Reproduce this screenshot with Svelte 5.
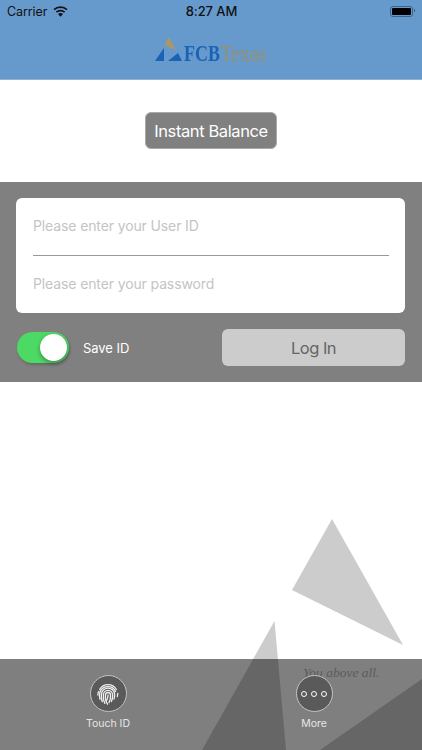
<script>
  let saveId = $state(true);
</script>

<div class="page">
  <header class="top">
    <div class="status">
      <div class="carrier">
        <span>Carrier</span>
        <svg class="wifi" width="15" height="11" viewBox="0 0 15 11">
          <path d="M7.5 10.8 L5 8.1 A3.6 3.6 0 0 1 10 8.1 Z" fill="#111" />
          <path d="M3.4 6.2 A6 6 0 0 1 11.6 6.2" fill="none" stroke="#111" stroke-width="1.7" />
          <path d="M1 3.7 A9.6 9.6 0 0 1 14 3.7" fill="none" stroke="#111" stroke-width="1.7" />
        </svg>
      </div>
      <span class="clock">8:27 AM</span>
      <div class="battery"><i></i></div>
    </div>
    <div class="logo">
      <svg width="28" height="26" viewBox="0 0 28 26">
        <polygon points="14,1 9,9 21,14" fill="#a9976c" />
        <polygon points="9,12 9,25 0,25" fill="#1b62b4" />
        <polygon points="23,17 27,25 13,25" fill="#1b62b4" />
      </svg>
      <span class="fcb">FCB</span><span class="texas">Texas</span>
    </div>
  </header>

  <section class="instant">
    <button class="instant-btn">Instant Balance</button>
  </section>

  <section class="login">
    <div class="card">
      <div class="field"><input placeholder="Please enter your User ID" /></div>
      <div class="field"><input type="password" placeholder="Please enter your password" /></div>
    </div>
    <div class="row">
      <div class="save">
        <button class="toggle" class:on={saveId} aria-label="Save ID" onclick={() => (saveId = !saveId)}><i></i></button>
        <span>Save ID</span>
      </div>
      <button class="log-in">Log In</button>
    </div>
  </section>

  <div class="spacer"></div>

  <svg class="shapes" width="422" height="240" viewBox="0 510 422 240">
    <polygon points="332,519 292,590 403,645" fill="#ccc" />
    <polygon points="274.5,621 202,750 286,750" fill="#ccc" />
    <polygon points="320,750 422,679 422,750" fill="#ccc" />
  </svg>
  <span class="tagline">You above all.</span>

  <nav class="bottom">
    <div class="tab">
      <div class="circle">
        <svg width="24" height="24" viewBox="0 0 24 24" fill="none" stroke="#eee" stroke-width="1.3" stroke-linecap="round">
          <path d="M3.6 7.5 A9.6 9.6 0 0 1 20.4 7.5" />
          <path d="M1.9 13 A10.2 10.2 0 0 1 2.6 9.6" />
          <path d="M3.9 17.2 A10 10 0 0 1 3.7 11.6 A8.4 8.4 0 0 1 19.6 9.5" />
          <path d="M6.3 19.6 A11 11 0 0 1 5.4 13 A6.6 6.6 0 0 1 18.6 12.4 C18.6 14 18.4 15.5 18 17" />
          <path d="M8.8 21.4 A12 12 0 0 1 7.4 13 A4.6 4.6 0 0 1 16.6 13 A16 16 0 0 1 15.4 19.6" />
          <path d="M11.6 22.2 A13 13 0 0 1 9.5 13 A2.5 2.5 0 0 1 14.5 13 A14 14 0 0 1 13 20.6" />
          <path d="M12 13 A12 12 0 0 1 10.6 18.4" />
          <path d="M21.3 14.5 L21.8 11.5" />
        </svg>
      </div>
      <span>Touch ID</span>
    </div>
    <div class="tab">
      <div class="circle dots"><i></i><i></i><i></i></div>
      <span>More</span>
    </div>
  </nav>
</div>

<style>
  :global(body) {
    margin: 0;
    background: #fff;
  }
  .page {
    position: relative;
    display: flex;
    flex-direction: column;
    width: 422px;
    height: 750px;
    overflow: hidden;
    font-family: Inter, "Liberation Sans", sans-serif;
  }
  .top {
    height: 80px;
    background: #6699cc;
    box-sizing: border-box;
    border-bottom: 1px solid #8fb3d8;
  }
  .status {
    display: grid;
    grid-template-columns: 1fr auto 1fr;
    align-items: center;
    height: 22px;
    padding: 0 6px 0 7px;
    font-size: 12.5px;
    letter-spacing: -0.1px;
    color: #111;
  }
  .carrier {
    display: flex;
    align-items: center;
    gap: 6px;
  }
  .clock {
    font-weight: 500;
    font-size: 13px;
    letter-spacing: -0.1px;
  }
  .battery {
    position: relative;
    justify-self: end;
    width: 19px;
    height: 7px;
    padding: 1px;
    border: 1px solid #3d6288;
    border-radius: 3px;
    margin-right: 3px;
  }
  .battery::after {
    content: "";
    position: absolute;
    right: -3px;
    top: 2px;
    width: 1px;
    height: 3px;
    background: #3d6288;
  }
  .battery i {
    display: block;
    height: 100%;
    background: #000;
    border-radius: 1px;
  }
  .logo {
    display: flex;
    justify-content: center;
    align-items: flex-end;
    height: 26px;
    margin-top: 14px;
    font-family: "Liberation Serif", serif;
    font-size: 23px;
    line-height: 23px;
    filter: blur(0.4px);
  }
  .logo svg {
    margin-right: 1px;
  }
  .fcb,
  .texas {
    display: inline-block;
    position: relative;
    top: 3px;
    transform-origin: left center;
    white-space: nowrap;
  }
  .fcb {
    width: 36px;
    color: #1b62b4;
    font-weight: bold;
    transform: scaleX(0.78);
  }
  .texas {
    width: 48px;
    color: #98906c;
    transform: scaleX(0.87);
  }
  .instant {
    display: flex;
    justify-content: center;
    align-items: flex-start;
    height: 102px;
    box-sizing: border-box;
    padding-top: 32px;
  }
  .instant-btn {
    width: 132px;
    height: 37px;
    padding: 0;
    border: 1px solid #aaa;
    border-radius: 6px;
    background: #808080;
    color: #fff;
    font: 400 16.5px Inter, sans-serif;
    letter-spacing: -0.4px;
  }
  .login {
    height: 200px;
    box-sizing: border-box;
    background: #808080;
    padding: 16px 17px 0 16px;
  }
  .card {
    height: 115px;
    box-sizing: border-box;
    padding: 0 16px 0 17px;
    background: #fff;
    border-radius: 6px;
  }
  .field {
    height: 57px;
  }
  .field:first-child {
    border-bottom: 1px solid #999;
  }
  .field input {
    display: block;
    width: 100%;
    height: 55px;
    padding: 0;
    border: 0;
    outline: 0;
    background: transparent;
    font: 400 14px Inter, sans-serif;
    letter-spacing: -0.12px;
  }
  .field input::placeholder {
    color: #c4c4c6;
  }
  .row {
    display: flex;
    justify-content: space-between;
    align-items: center;
    margin-top: 16px;
  }
  .save {
    display: flex;
    align-items: center;
    gap: 14px;
    color: #fff;
    font-size: 13px;
    letter-spacing: -0.05px;
  }
  .toggle {
    position: relative;
    width: 52px;
    height: 31px;
    margin-left: 1px;
    padding: 0;
    border: 0;
    border-radius: 16px;
    background: #8a8a8a;
  }
  .toggle.on {
    background: #4cd964;
    box-shadow: 1px 2px 3px rgba(0, 0, 0, 0.2);
  }
  .toggle i {
    position: absolute;
    top: 2px;
    left: 2px;
    width: 27px;
    height: 27px;
    border-radius: 50%;
    background: #fff;
    box-shadow: 0 2px 4px rgba(0, 0, 0, 0.35);
  }
  .toggle.on i {
    left: 23px;
  }
  .log-in {
    width: 183px;
    height: 37px;
    padding: 0;
    border: 0;
    border-radius: 6px;
    background: #cccccc;
    color: #666;
    font: 400 16.5px Inter, sans-serif;
    letter-spacing: -0.5px;
  }
  .spacer {
    flex: 1;
  }
  .shapes {
    position: absolute;
    left: 0;
    bottom: 0;
  }
  .tagline {
    position: absolute;
    left: 303px;
    top: 665px;
    font: italic 13.5px "Liberation Serif", serif;
    color: #b8b8b8;
  }
  .bottom {
    position: absolute;
    left: 0;
    right: 0;
    bottom: 0;
    height: 91px;
    display: grid;
    grid-template-columns: 216px 196px;
    background: rgba(0, 0, 0, 0.5);
  }
  .tab {
    display: flex;
    flex-direction: column;
    align-items: center;
    gap: 5px;
    padding-top: 16px;
    color: #e6e6e6;
    font-size: 10.5px;
  }
  .circle {
    box-sizing: border-box;
    width: 37px;
    height: 37px;
    border: 1px solid #c4c4c4;
    border-radius: 50%;
    background: #5a5a5a;
    display: flex;
    align-items: center;
    justify-content: center;
  }
  .dots {
    gap: 4px;
  }
  .dots i {
    box-sizing: border-box;
    width: 6px;
    height: 6px;
    border: 1.2px solid #fff;
    border-radius: 50%;
  }
</style>
